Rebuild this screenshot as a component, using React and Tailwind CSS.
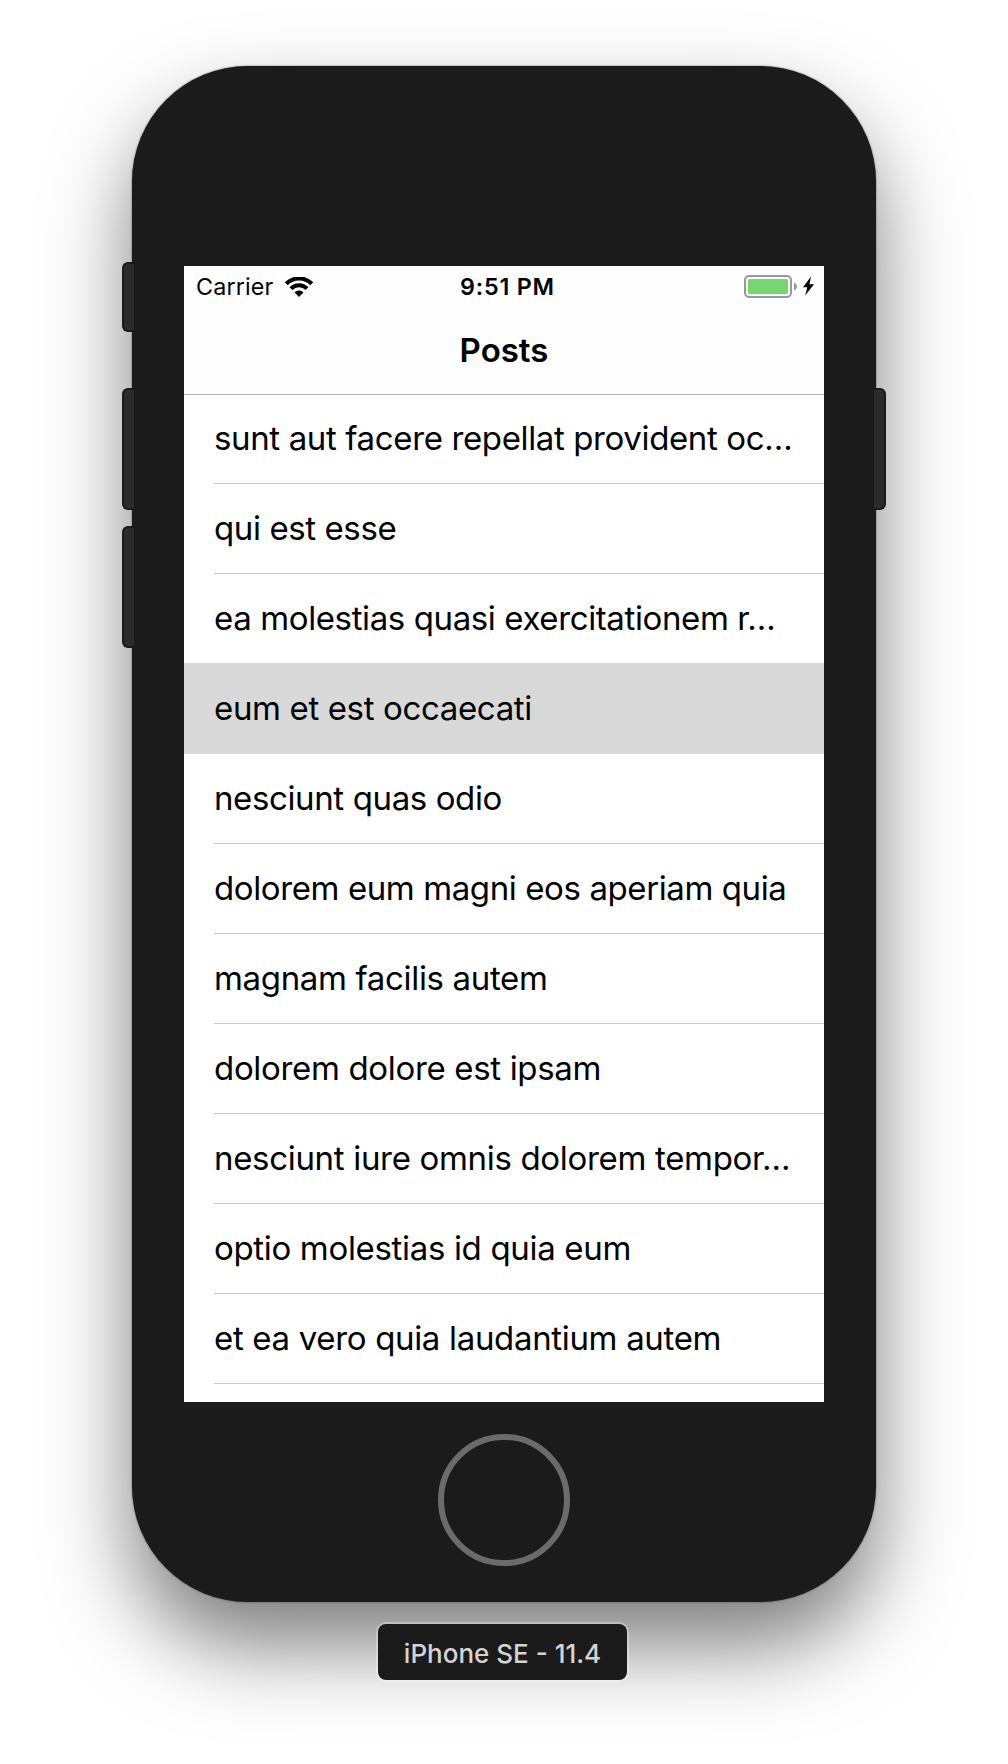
const posts = [
  { title: "sunt aut facere repellat provident oc…", tracking: "tracking-[-0.37px]" },
  { title: "qui est esse", tracking: "tracking-[-0.4px]" },
  { title: "ea molestias quasi exercitationem r…", tracking: "tracking-[-0.385px]" },
  { title: "eum et est occaecati", tracking: "tracking-[-0.36px]", selected: true },
  { title: "nesciunt quas odio", tracking: "tracking-[-0.38px]" },
  { title: "dolorem eum magni eos aperiam quia", tracking: "tracking-[-0.4px]" },
  { title: "magnam facilis autem", tracking: "tracking-[-0.34px]" },
  { title: "dolorem dolore est ipsam", tracking: "tracking-[-0.33px]" },
  { title: "nesciunt iure omnis dolorem tempor…", tracking: "tracking-[-0.32px]" },
  { title: "optio molestias id quia eum", tracking: "tracking-[-0.33px]" },
  { title: "et ea vero quia laudantium autem", tracking: "tracking-[-0.33px]" },
];

function WifiIcon() {
  return (
    <svg width="28" height="20" viewBox="0 0 28 20" fill="none" stroke="#000">
      <path d="M1.3 6.7 A18 18 0 0 1 26.7 6.7" strokeWidth="4.2" />
      <path d="M6 11.6 A11.3 11.3 0 0 1 22 11.6" strokeWidth="4" />
      <path d="M14 13.6 C16 13.6 17.4 14.4 18.4 15.5 L14 19.9 L9.6 15.5 C10.6 14.4 12 13.6 14 13.6 Z" fill="#000" stroke="none" />
    </svg>
  );
}

function BatteryIcon() {
  return (
    <svg width="70" height="24" viewBox="0 0 70 24" fill="none">
      <rect x="1" y="1" width="46" height="21" rx="4" stroke="#999" strokeWidth="2" />
      <rect x="4" y="4" width="40" height="15" rx="1.5" fill="#77d572" />
      <path d="M50 7.5 C52 8.5 53 10 53 11.5 C53 13 52 14.5 50 15.5 Z" fill="#999" />
      <path d="M67 1.5 L59 12.2 H63.3 L61.2 20.5 L70 9.2 H65.4 Z" fill="#000" />
    </svg>
  );
}

function StatusBar() {
  return (
    <div className="grid h-[42px] grid-cols-3 items-center pl-3 pr-2.5">
      <div className="flex items-center gap-3">
        <span className="text-[23.3px] leading-10 tracking-[0.15px]">Carrier</span>
        <WifiIcon />
      </div>
      <span className="pl-[5px] text-center text-[23.3px] font-semibold leading-10 tracking-[0.8px]">9:51 PM</span>
      <div className="flex justify-end">
        <BatteryIcon />
      </div>
    </div>
  );
}

function Row({ title, tracking, selected }) {
  return (
    <li className={selected ? "-mt-px h-[91px] bg-[#d9d9d9] pl-[30px] pt-px" : "h-[90px] pl-[30px]"}>
      <div className={"flex h-[90px] items-center whitespace-nowrap border-b text-[33px] " + tracking + (selected ? " border-transparent" : " border-[#c8c7cc]")}>
        {title}
      </div>
    </li>
  );
}

function Screen() {
  return (
    <div className="h-[1136px] w-[640px] overflow-hidden bg-white text-black">
      <header className="relative -mb-px h-[129px] border-b border-[#b2b2b2] bg-[#fefefe]">
        <StatusBar />
        <h1 className="text-center text-[33px] font-semibold leading-[84px]">Posts</h1>
      </header>
      <ul>
        {posts.map((p) => (
          <Row key={p.title} {...p} />
        ))}
      </ul>
    </div>
  );
}

function SideButton({ className }) {
  return <div className={"absolute w-3 border-2 border-[#1a1a1a] bg-[#2b2b2b] " + className} />;
}

export default function App() {
  return (
    <div className="flex h-[1764px] w-[1008px] flex-col items-center overflow-hidden bg-white pt-[66px] font-['Inter',sans-serif]">
      <div className="relative flex h-[1536px] w-[744px] shrink-0 flex-col items-center rounded-[116px] bg-[#1b1b1b] pt-[200px] shadow-[0_0_2px_rgba(0,0,0,0.55),0_44px_84px_rgba(0,0,0,0.51)]">
        <SideButton className="-left-2.5 top-[196px] h-[70px] rounded-l-md border-r-0" />
        <SideButton className="-left-2.5 top-[322px] h-[122px] rounded-l-md border-r-0" />
        <SideButton className="-left-2.5 top-[460px] h-[122px] rounded-l-md border-r-0" />
        <SideButton className="-right-2.5 top-[322px] h-[122px] rounded-r-md border-l-0" />
        <Screen />
        <div className="mt-8 size-[132px] rounded-full border-[6px] border-[#6b6b6b]" />
      </div>
      <div className="relative mr-[3px] mt-[22px] flex h-14 w-[249px] shrink-0 items-center justify-center rounded-lg bg-[#1b1b1b] pt-0.5 text-[26px] font-medium text-[#d4d4d4] shadow-[0_0_0_2px_rgba(255,255,255,0.3)]">
        iPhone SE - 11.4
      </div>
    </div>
  );
}
